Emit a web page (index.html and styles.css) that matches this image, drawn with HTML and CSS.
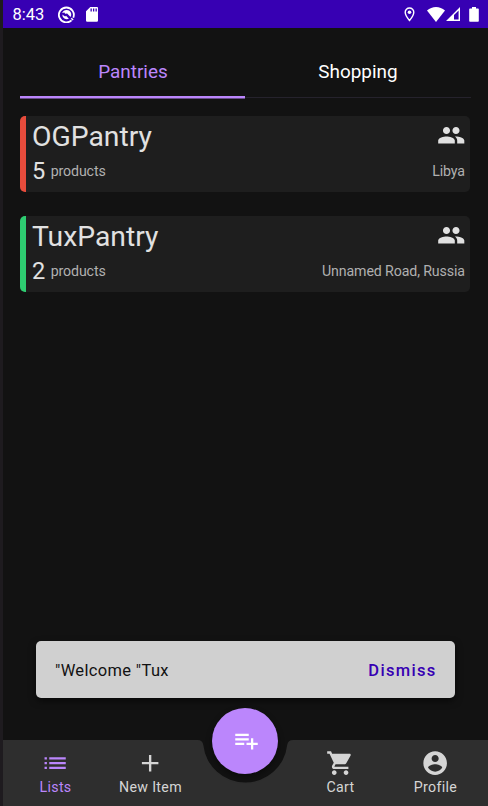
FILE: index.html
```html
<!DOCTYPE html>
<html lang="en">
<head>
<meta charset="utf-8">
<title>Pantries</title>
<link rel="stylesheet" href="styles.css">
</head>
<body>
<div class="screen">
  <header class="status">
    <span class="clock">8:43</span>
    <svg class="s-debug" viewBox="0 0 18 18"><path d="M14.300 15.200A7.900 7.900 0 1 1 16.200 12.400" fill="none" stroke="#fff" stroke-width="1.900"/><path d="M4.400 7.400A5 5 0 0 1 13.800 7.400a5 5 0 0 1-.5 4.300L9.700 8 7.500 8.300 6.800 7z" fill="#fff"/><path d="M4.500 9l3 2 1-.6 3 3.200a5 5 0 0 1-7-4.600z" fill="#fff"/><path d="M14 13l2 1.800" stroke="#fff" stroke-width="1.600"/></svg>
    <svg class="s-sd" viewBox="0 0 12 15"><path fill="#fff" fill-rule="evenodd" d="M4.300 0H11a1 1 0 0 1 1 1V13.500a1.200 1.200 0 0 1-1.200 1.200H1.200A1.200 1.200 0 0 1 0 13.500V4.300zM4.500 1.500v3h1.300v-3zM7 1.500v3h1.300v-3zM9.500 1.500v3h1.300v-3z"/></svg>
    <span class="grow"></span>
    <svg class="s-pin" viewBox="0 0 11 15"><path d="M5.500 1a4.300 4.300 0 0 0-4.300 4.300C1.200 8.500 5.500 13.500 5.500 13.500s4.300-5 4.300-8.200A4.300 4.300 0 0 0 5.500 1z" fill="none" stroke="#fff" stroke-width="1.400"/><circle cx="5.500" cy="5.200" r="1.800" fill="#fff"/></svg>
    <svg class="s-wifi" viewBox="0 0 18 15"><path fill="#fff" d="M9 15L0 3.500Q4 0 9 0t9 3.500z"/></svg>
    <svg class="s-cell" viewBox="0 0 14 14"><path fill="#fff" fill-rule="evenodd" d="M14 0v14H0zM12.600 3.400V12.600H8V8z"/></svg>
    <svg class="s-batt" viewBox="0 0 10 15"><path fill="#fff" d="M3 0h4v1.500h2a.8.8 0 0 1 .8.8V14a.8.8 0 0 1-.8.8H1a.8.8 0 0 1-.8-.8V2.300a.8.8 0 0 1 .8-.8h2z"/></svg>
  </header>

  <nav class="tabs">
    <div class="tab active"><span>Pantries</span></div>
    <div class="tab"><span>Shopping</span></div>
  </nav>

  <main class="list">
    <article class="card red">
      <div class="row top">
        <h2>OGPantry</h2>
        <svg class="people" viewBox="0 0 24 24"><path d="M16 11c1.660 0 2.990-1.340 2.990-3S17.660 5 16 5s-3 1.340-3 3 1.340 3 3 3zm-8 0c1.660 0 2.990-1.340 2.990-3S9.660 5 8 5 5 6.340 5 8s1.340 3 3 3zm0 2c-2.330 0-7 1.170-7 3.500V19h14v-2.500c0-2.330-4.670-3.500-7-3.500zm8 0c-.29 0-.62.02-.97.05 1.160.84 1.970 1.970 1.970 3.450V19h6v-2.500c0-2.330-4.670-3.500-7-3.500z"/></svg>
      </div>
      <div class="row info"><span class="count">5</span><span class="small">products</span><span class="small place">Libya</span></div>
    </article>
    <article class="card green">
      <div class="row top">
        <h2>TuxPantry</h2>
        <svg class="people" viewBox="0 0 24 24"><path d="M16 11c1.660 0 2.990-1.340 2.990-3S17.660 5 16 5s-3 1.340-3 3 1.340 3 3 3zm-8 0c1.660 0 2.990-1.340 2.990-3S9.660 5 8 5 5 6.340 5 8s1.340 3 3 3zm0 2c-2.330 0-7 1.170-7 3.500V19h14v-2.500c0-2.330-4.670-3.500-7-3.500zm8 0c-.29 0-.62.02-.97.05 1.160.84 1.970 1.970 1.970 3.450V19h6v-2.500c0-2.330-4.670-3.500-7-3.500z"/></svg>
      </div>
      <div class="row info"><span class="count">2</span><span class="small">products</span><span class="small place">Unnamed Road, Russia</span></div>
    </article>
  </main>

  <div class="snackbar"><span class="message">"Welcome "Tux</span><span class="dismiss">Dismiss</span></div>

  <footer class="bar">
    <svg class="bar-shape" viewBox="0 0 485 66"><path d="M0 0H194.500Q199.500 0 200.300 5A42.200 42.200 0 0 0 284.200 5Q285 0 290 0H485V66H0z"/></svg>
    <div class="items">
      <div class="item active"><svg viewBox="0 0 24 24"><path d="M3 13h2v-2H3v2zm0 4h2v-2H3v2zm0-8h2V7H3v2zm4 4h14v-2H7v2zm0 4h14v-2H7v2zM7 7v2h14V7H7z"/></svg><span>Lists</span></div>
      <div class="item"><svg viewBox="0 0 24 24"><path d="M19 13h-6v6h-2v-6H5v-2h6V5h2v6h6v2z"/></svg><span>New Item</span></div>
      <div class="item"></div>
      <div class="item"><svg viewBox="0 0 24 24"><path d="M7 18c-1.100 0-1.990.9-1.990 2S5.900 22 7 22s2-.9 2-2-.9-2-2-2zM1 2v2h2l3.600 7.590-1.350 2.450c-.16.28-.25.61-.25.96 0 1.100.9 2 2 2h12v-2H7.420c-.14 0-.25-.11-.25-.25l.03-.12.9-1.630h7.450c.75 0 1.410-.41 1.750-1.030l3.580-6.490c.08-.14.12-.31.12-.48 0-.55-.45-1-1-1H5.210l-.94-2H1zm16 16c-1.100 0-1.990.9-1.990 2s.89 2 1.990 2 2-.9 2-2-.9-2-2-2z"/></svg><span>Cart</span></div>
      <div class="item"><svg viewBox="0 0 24 24"><path d="M12 2C6.480 2 2 6.480 2 12s4.480 10 10 10 10-4.480 10-10S17.520 2 12 2zm0 3c1.660 0 3 1.340 3 3s-1.340 3-3 3-3-1.340-3-3 1.340-3 3-3zm0 14.200c-2.500 0-4.710-1.280-6-3.220.03-1.990 4-3.080 6-3.080 1.990 0 5.970 1.090 6 3.080-1.290 1.940-3.500 3.220-6 3.220z"/></svg><span>Profile</span></div>
    </div>
    <div class="fab"><svg viewBox="0 0 24 24"><path d="M14 10H2v2h12v-2zm0-4H2v2h12V6zm4 8v-4h-2v4h-4v2h4v4h2v-4h4v-2h-4zM2 16h8v-2H2v2z"/></svg></div>
  </footer>
</div>
</body>
</html>
```
FILE: styles.css
```css
* { box-sizing: border-box; }
body { margin: 0; background: #1e1b1f; font-family: Roboto, sans-serif; color: #e1e1e1; }
svg { display: block; flex: none; }
.screen { margin-left: 3px; height: 806px; background: #121212; display: flex; flex-direction: column; overflow: hidden; }

.status { height: 28px; flex: none; background: #3700b3; display: flex; align-items: center; padding: 0 9px 0 9.500px; color: #fff; }
.clock { font-size: 16.500px; line-height: 20px; width: 45px; padding-top: 2px; }
.s-debug { width: 17px; height: 17px; }
.s-sd { width: 12px; height: 15px; margin-left: 11.500px; }
.grow { flex: 1; }
.s-pin { width: 11px; height: 15px; margin-right: 12px; }
.s-wifi { width: 18px; height: 15px; margin-right: 1px; }
.s-cell { width: 14px; height: 14px; margin-right: 9px; }
.s-batt { width: 10px; height: 15px; }

.tabs { display: flex; flex: none; margin: 18px 17.500px 0 17.400px; height: 53px; }
.tab { flex: 1; display: flex; justify-content: center; font-size: 18.900px; line-height: 22px; padding-top: 15px; color: #fff; background: linear-gradient(#25222c, #25222c) 0 51px / 100% 1px no-repeat; }
.tab.active { color: #bb86fc; background: linear-gradient(#bb86fc, #bb86fc) 0 50px / 100% 2.500px no-repeat; }

.list { flex: 1; padding: 17px 17.600px 0 17.400px; display: flex; flex-direction: column; gap: 24px; }
.card { height: 76px; border-radius: 5px; background: #1e1e1e; border-left: 6px solid; padding: 3px 5.500px 0 5.600px; overflow: hidden; }
.red { border-color: #e74c3c; }
.green { border-color: #2ecc71; }
.row { display: flex; align-items: flex-start; }
.top { justify-content: space-between; height: 35px; }
h2 { margin: 0; font-size: 28.300px; line-height: 35px; font-weight: 400; }
.people { width: 28.500px; height: 28.500px; fill: #e1e1e1; margin: 2px -.4px 0 0; }
.info { align-items: center; height: 34px; }
.count { font-size: 23.600px; line-height: 34px; }
.small { font-size: 14.200px; letter-spacing: -.12px; line-height: 34px; margin-left: 5.400px; color: #b0b0b0; }
.place { margin-left: auto; }

.snackbar { flex: none; height: 57px; margin: 0 33px 42.500px; border-radius: 5px; background: #d0d0d0; display: flex; align-items: center; justify-content: space-between; padding: 2px 18.500px 0 19px; font-size: 16.500px; color: #121212; box-shadow: 0 3px 7px #0008; }
.message { letter-spacing: .34px; }
.dismiss { color: #3700b3; font-weight: 500; letter-spacing: 1.300px; }

.bar { position: relative; flex: none; height: 66px; }
.bar-shape { position: absolute; left: 0; top: 0; width: 485px; height: 66px; fill: #2e2e2e; }
.items { position: relative; display: flex; padding: 9.400px 5px 0; }
.item { width: 95px; display: flex; flex-direction: column; align-items: center; font-size: 14.200px; line-height: 19px; letter-spacing: .34px; color: #d5d5d5; fill: #d5d5d5; }
.item svg { width: 28.300px; height: 28.300px; }
.active.item { color: #bb86fc; fill: #bb86fc; }
.fab { position: absolute; left: 209px; top: -32.500px; width: 66px; height: 66px; border-radius: 50%; background: #bb86fc; display: flex; align-items: center; justify-content: center; fill: #fff; box-shadow: 0 3px 6px #0006; }
.fab svg { width: 27px; height: 27px; position: relative; left: 1px; top: .4px; }
```
